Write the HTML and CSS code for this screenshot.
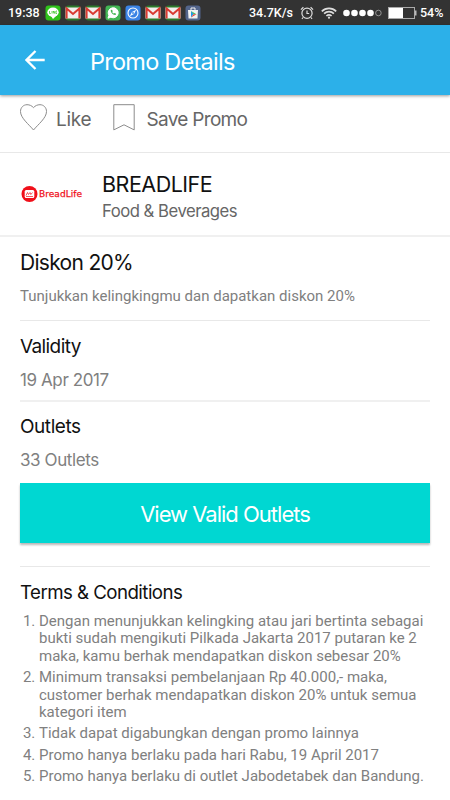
FILE: index.html
```html
<!DOCTYPE html>
<html lang="id">
<head>
  <meta charset="UTF-8" />
  <meta name="viewport" content="width=device-width, initial-scale=1.0"/>
  <title>Promo Details</title>
  <link rel="stylesheet" href="styles.css">
</head>
<body>
  <div class="status-bar">
    <span class="status-time">19:38</span>
    <div class="status-apps">
      <svg class="app-icon" viewBox="0 0 16 16"><rect x=".5" y=".5" width="15" height="15" rx="3" fill="#2fc21b"/><ellipse cx="8" cy="7.3" rx="5.7" ry="4.7" fill="#fff"/><path d="M6 11l2 3 3.500-3.500z" fill="#fff"/><path d="M4.500 6v2.500h1.300M7 6v2.500M8.300 8.500V6l1.500 2.500V6M12 6h-1v2.500h1" fill="none" stroke="#2fc21b" stroke-width=".7"/></svg>
      <svg class="app-icon" viewBox="0 0 16 16"><use href="#gmail"/></svg>
      <svg class="app-icon" viewBox="0 0 16 16"><use href="#gmail"/></svg>
      <svg class="app-icon" viewBox="0 0 16 16"><rect x=".5" y=".5" width="15" height="15" rx="3" fill="#43b654"/><path d="M3 13.200l.9-2.900a5 5 0 1 1 2 1.900z" fill="#fff" stroke="#fff" stroke-width="1"/><path d="M5.800 5c-.5 2.500 2.500 5.500 4.800 4.900l.5-1.200-1.500-.8-.8.7c-.8-.3-1.300-.9-1.600-1.600l.6-.8L7 4.800z" fill="#43b654"/></svg>
      <svg class="app-icon" viewBox="0 0 16 16"><rect x=".5" y=".5" width="15" height="15" rx="3" fill="#3b83e5"/><circle cx="8" cy="8" r="5" fill="none" stroke="#fff" stroke-width="1.100"/><path d="M11.300 4.700L9 9 4.700 11.300 7 7z" fill="#fff"/><circle cx="8" cy="8" r=".9" fill="#3b83e5"/></svg>
      <svg class="app-icon" viewBox="0 0 16 16"><use href="#gmail"/></svg>
      <svg class="app-icon" viewBox="0 0 16 16"><use href="#gmail"/></svg>
      <svg class="app-icon" viewBox="0 0 16 16"><rect x=".5" y=".5" width="15" height="15" rx="3" fill="#53658b"/><path d="M3 5h10l-.5 8.500h-9z" fill="#f2f2f2"/><path d="M6 5V3h4v2" fill="none" stroke="#f2f2f2"/><path d="M6 6v6.500L8.500 9z" fill="#2196e8"/><path d="M6 6l5.500 3.200h-3z" fill="#3dba63"/><path d="M6 12.500l5.500-3.300h-3z" fill="#e94335"/></svg>
    </div>
    <span class="status-speed">34.7K/s</span>
    <svg class="icon-alarm" viewBox="0 0 14 14"><circle cx="7" cy="7.300" r="5.100"/><path d="M7 4.500v3h2.200M.9 3.600L3.400 1.200M13.100 3.600l-2.500-2.400M3 11.500l-1 1.300M11 11.500l1 1.300"/></svg>
    <svg class="icon-wifi" viewBox="0 0 16 12"><path d="M.8 4.300a10.300 10.300 0 0 1 14.400 0M3.100 6.700a7 7 0 0 1 9.800 0M5.400 9a3.800 3.800 0 0 1 5.200 0"/><circle cx="8" cy="10.700" r="1.100"/></svg>
    <svg class="icon-signal" viewBox="0 0 39 8"><g fill="#fff"><circle cx="3.500" cy="4" r="3.300"/><circle cx="11.500" cy="4" r="3.300"/><circle cx="19.500" cy="4" r="3.300"/><circle cx="27.500" cy="4" r="3.300"/></g><circle cx="35.400" cy="4" r="2.800" fill="none" stroke="#aaa" stroke-width=".8"/></svg>
    <svg class="icon-battery" viewBox="0 0 29 12"><rect x=".5" y=".5" width="26" height="11" fill="none" stroke="#aaa"/><path d="M1 1h14v10H1z" fill="#fff"/><path d="M27 3.500h1.500v5H27z" fill="#bbb"/></svg>
    <span class="status-battery">54%</span>
  </div>

  <header class="app-bar">
    <svg class="icon-back" viewBox="0 0 20 20"><path d="M19.700 10H1.500M10.500 1L1.500 10l9 9"/></svg>
    <h1>Promo Details</h1>
  </header>

  <div class="actions">
    <svg class="icon-heart" viewBox="0 0 27 27"><path d="M13.500 26C9 20.500.5 14 .5 7.500.5 3.500 3.500.7 7 .7c2.700 0 4.700 1 6.500 2.900C15.300 1.700 17.300.7 20 .7c3.500 0 6.500 2.800 6.500 6.800C26.500 14 18 20.500 13.500 26z"/></svg>
    <span class="like">Like</span>
    <svg class="icon-bookmark" viewBox="0 0 22 27"><path d="M.8.7h20.400v25.200L11 20.800.8 25.900z"/></svg>
    <span class="save">Save Promo</span>
  </div>

  <div class="merchant">
    <svg class="merchant-logo" viewBox="0 0 62 18">
      <circle cx="8.500" cy="9" r="8" fill="#f0101a"/>
      <rect x="3.700" y="5" width="9.600" height="8" rx="1.500" fill="#fff"/>
      <path d="M5 10.500l1.500-3 1 2 1.500-2 .8 2 1.700-2M5 11.500h7" fill="none" stroke="#f0101a" stroke-width=".7"/>
      <text x="18" y="12.300" textLength="43" lengthAdjust="spacingAndGlyphs">BreadLife</text>
    </svg>
    <div class="merchant-info">
      <h2>BREADLIFE</h2>
      <p>Food &amp; Beverages</p>
    </div>
  </div>

  <main class="details">
    <section class="promo">
      <h2>Diskon 20%</h2>
      <p>Tunjukkan kelingkingmu dan dapatkan diskon 20%</p>
    </section>
    <section class="validity">
      <h3>Validity</h3>
      <p>19 Apr 2017</p>
    </section>
    <section class="outlets">
      <h3>Outlets</h3>
      <p>33 Outlets</p>
      <button type="button" class="btn-outlets">View Valid Outlets</button>
    </section>
    <section class="terms">
      <h3>Terms &amp; Conditions</h3>
      <ol>
        <li>Dengan menunjukkan kelingking atau jari bertinta sebagai<br>bukti sudah mengikuti Pilkada Jakarta 2017 putaran ke 2<br>maka, kamu berhak mendapatkan diskon sebesar 20%</li>
        <li>Minimum transaksi pembelanjaan Rp 40.000,- maka,<br>customer berhak mendapatkan diskon 20% untuk semua<br>kategori item</li>
        <li>Tidak dapat digabungkan dengan promo lainnya</li>
        <li>Promo hanya berlaku pada hari Rabu, 19 April 2017</li>
        <li>Promo hanya berlaku di outlet Jabodetabek dan Bandung.</li>
      </ol>
    </section>
  </main>

  <svg width="0" height="0" class="symbols">
    <symbol id="gmail" viewBox="0 0 16 16">
      <rect x=".5" y=".5" width="15" height="15" rx="3" fill="#2c7a2c"/>
      <path d="M.5 2.500h15v11H.5z" fill="#f3f0ee"/>
      <path d="M1.600 13.500V3.500L8 9l6.400-5.500v10" fill="none" stroke="#d93a32" stroke-width="2"/>
    </symbol>
  </svg>
</body>
</html>
```
FILE: styles.css
```css
* { box-sizing: border-box; }
body {
  margin: 0;
  height: 800px;
  overflow: hidden;
  background: #fff;
  font-family: Inter, "Liberation Sans", sans-serif;
  color: #111;
}
h1, h2, h3, p, ol { margin: 0; font-weight: 400; }
svg { display: block; flex: none; }
.symbols { display: none; }

.status-bar {
  display: flex;
  align-items: center;
  height: 25px;
  padding-left: 8px;
  background: #333;
  color: #fff;
  font: 500 12.5px/25px Roboto, sans-serif;
  white-space: nowrap;
}
.status-time { width: 37px; }
.status-apps { display: flex; gap: 4px; width: 204px; }
.app-icon { width: 16px; height: 16px; }
.status-speed { width: 51px; }
.icon-alarm, .icon-wifi { fill: none; stroke: #ddd; stroke-width: 1.2; }
.icon-alarm { width: 14px; height: 14px; }
.icon-wifi { width: 16px; height: 12px; margin-left: 7px; stroke-width: 1.7; }
.icon-wifi circle { fill: #ddd; stroke: none; }
.icon-signal { width: 39px; height: 8px; margin-left: 6px; }
.icon-battery { width: 29px; height: 12px; margin-left: 6px; }
.status-battery { margin-left: 3px; }

.app-bar {
  display: flex;
  align-items: center;
  height: 70px;
  padding: 0 25px;
  background: #2cb0e9;
  color: #fff;
  box-shadow: 0 1px 3px rgba(0, 0, 0, .4);
}
.icon-back { width: 20px; height: 20px; fill: none; stroke: #fff; stroke-width: 2.3; }
.app-bar h1 { margin-left: 45px; padding-top: 3px; font-size: 23.5px; letter-spacing: -.75px; }

.actions {
  display: flex;
  height: 58px;
  padding: 9px 20px 0;
  border-bottom: 1px solid #e8e8e8;
  color: #666;
  font-size: 19px;
  line-height: 31px;
  letter-spacing: -.7px;
}
.icon-heart, .icon-bookmark { height: 27px; fill: none; stroke: #8c8c8c; stroke-width: 1; }
.icon-heart { width: 27px; }
.icon-bookmark { width: 22px; }
.like { width: 57px; padding-left: 9px; letter-spacing: -.3px; }
.icon-bookmark { margin-left: 9px; }
.save { margin-left: 11.5px; }

.merchant {
  display: flex;
  align-items: center;
  height: 84px;
  padding-left: 21px;
  border-bottom: 2px solid #f0f0f0;
}
.merchant-logo { width: 62px; height: 18px; }
.merchant-logo text { font: 9.5px "DejaVu Sans", sans-serif; fill: #f0101a; stroke: #f0101a; stroke-width: .25; }
.merchant-info { margin-left: 19px; padding-top: 5px; }
.merchant-info h2 { font-size: 21.5px; line-height: 28px; letter-spacing: -.5px; }
.merchant-info p { color: #666; font-size: 16.7px; line-height: 26px; letter-spacing: -.5px; }

.details { padding: 0 20px; }
.details p { color: #808080; font-size: 17px; line-height: 24px; letter-spacing: -.4px; }
.details h3 { font-size: 19px; line-height: 26px; letter-spacing: -.6px; }
.promo { height: 84px; padding-top: 12px; border-bottom: 1px solid #e8e8e8; }
.promo h2 { font-size: 21px; line-height: 28px; letter-spacing: -.7px; }
.details .promo p { margin-top: 7px; font-family: Roboto, sans-serif; font-size: 15px; letter-spacing: 0; }
.validity { height: 81px; padding-top: 13px; border-bottom: 2px solid #f0f0f0; }
.validity p, .outlets p { margin-top: 8px; }
.outlets { height: 165px; padding-top: 12px; border-bottom: 1px solid #e8e8e8; }
.outlets h3 { letter-spacing: -.45px; }
.btn-outlets {
  display: block;
  width: 100%;
  height: 60px;
  margin-top: 11.4px;
  padding: 2px 0 0;
  border: none;
  background: #00d7d2;
  color: #fff;
  font: 400 22px Inter, sans-serif;
  letter-spacing: -1px;
  box-shadow: 0 2px 2px rgba(0, 0, 0, .28);
}
.terms { padding-top: 13px; }
.terms h3 { font-size: 18.7px; letter-spacing: -.55px; }
.terms ol {
  margin-top: 6.5px;
  padding-left: 19px;
  color: #808080;
  font-family: Roboto, sans-serif;
  font-size: 15px;
  line-height: 17.6px;
  letter-spacing: 0;
  white-space: nowrap;
}
.terms li { margin-bottom: 3.7px; }
```
